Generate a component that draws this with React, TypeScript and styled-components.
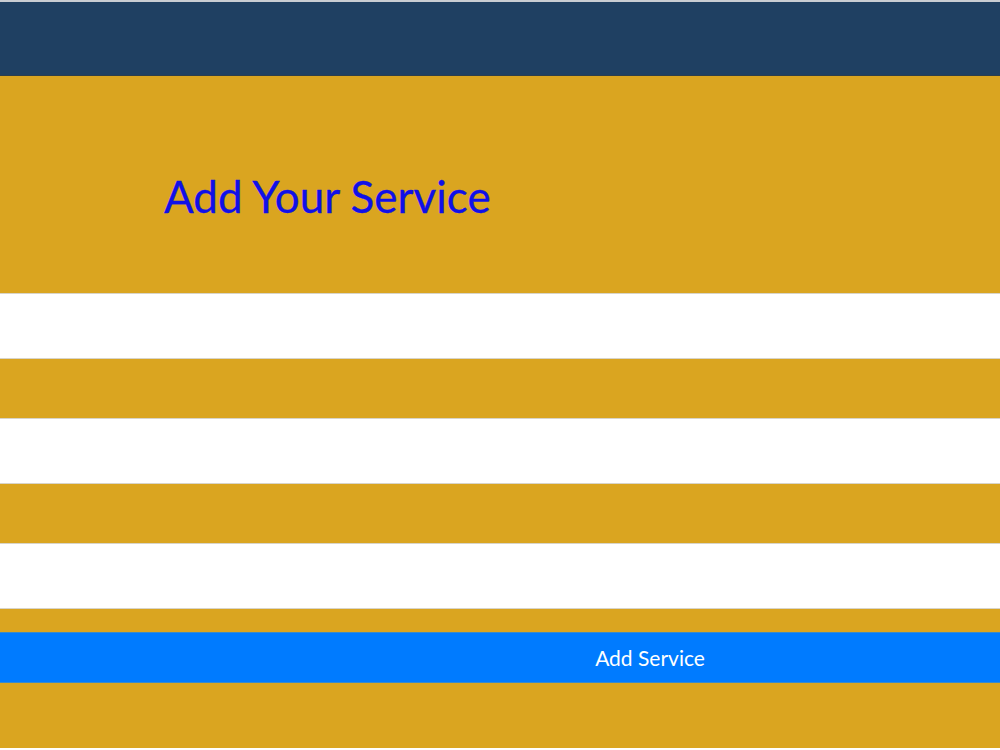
import React from "react";
import styled, { createGlobalStyle } from "styled-components";

const Global = createGlobalStyle`
  html, body { margin: 0; padding: 0; background: #ffffff; }
  body { font-family: Lato, "Noto Sans", sans-serif; }
`;

const Page = styled.div`
  display: flex;
  flex-direction: column;
  width: 1000px;
  height: 748px;
  background: #daa520;
  overflow: hidden;
`;

const Header = styled.header`
  height: 73px;
  flex: none;
  background: #1f4062;
  border-top: 2px solid #c9cdd2;
  border-bottom: 1px solid #2e3f4a;
`;

const Hero = styled.div`
  box-sizing: border-box;
  height: 217px;
  flex: none;
  display: flex;
  align-items: center;
  padding: 22px 0 0 164px;
`;

const Title = styled.h1`
  margin: 0;
  font-family: Lato, "Noto Sans", sans-serif;
  font-weight: 400;
  font-size: 44px;
  color: #1010e8;
  -webkit-text-stroke: 0.3px #1010e8;
`;

const Form = styled.form`
  display: flex;
  flex-direction: column;
  gap: 59px;
`;

const Field = styled.input`
  display: block;
  box-sizing: border-box;
  width: 100%;
  height: 66px;
  margin: 0;
  border: 1px solid #d8d4c8;
  border-left: none;
  border-right: none;
  background: #ffffff;
  outline: none;
`;

const Submit = styled.button`
  display: block;
  box-sizing: border-box;
  width: 100%;
  height: 51px;
  margin-top: -36px;
  padding: 0 0 0 300px;
  border: none;
  border-top: 1px solid #3a8ac8;
  border-bottom: 1px solid #3a8ac8;
  background: #007bff;
  color: #ffffff;
  font-family: Lato, "Noto Sans", sans-serif;
  font-size: 21px;
  cursor: pointer;
`;

export default function App() {
  return (
    <>
      <Global />
      <Page>
        <Header />
        <Hero>
          <Title>Add Your Service</Title>
        </Hero>
        <Form onSubmit={(e) => e.preventDefault()}>
          <Field type="text" />
          <Field type="text" />
          <Field type="text" />
          <Submit type="submit">Add Service</Submit>
        </Form>
      </Page>
    </>
  );
}
